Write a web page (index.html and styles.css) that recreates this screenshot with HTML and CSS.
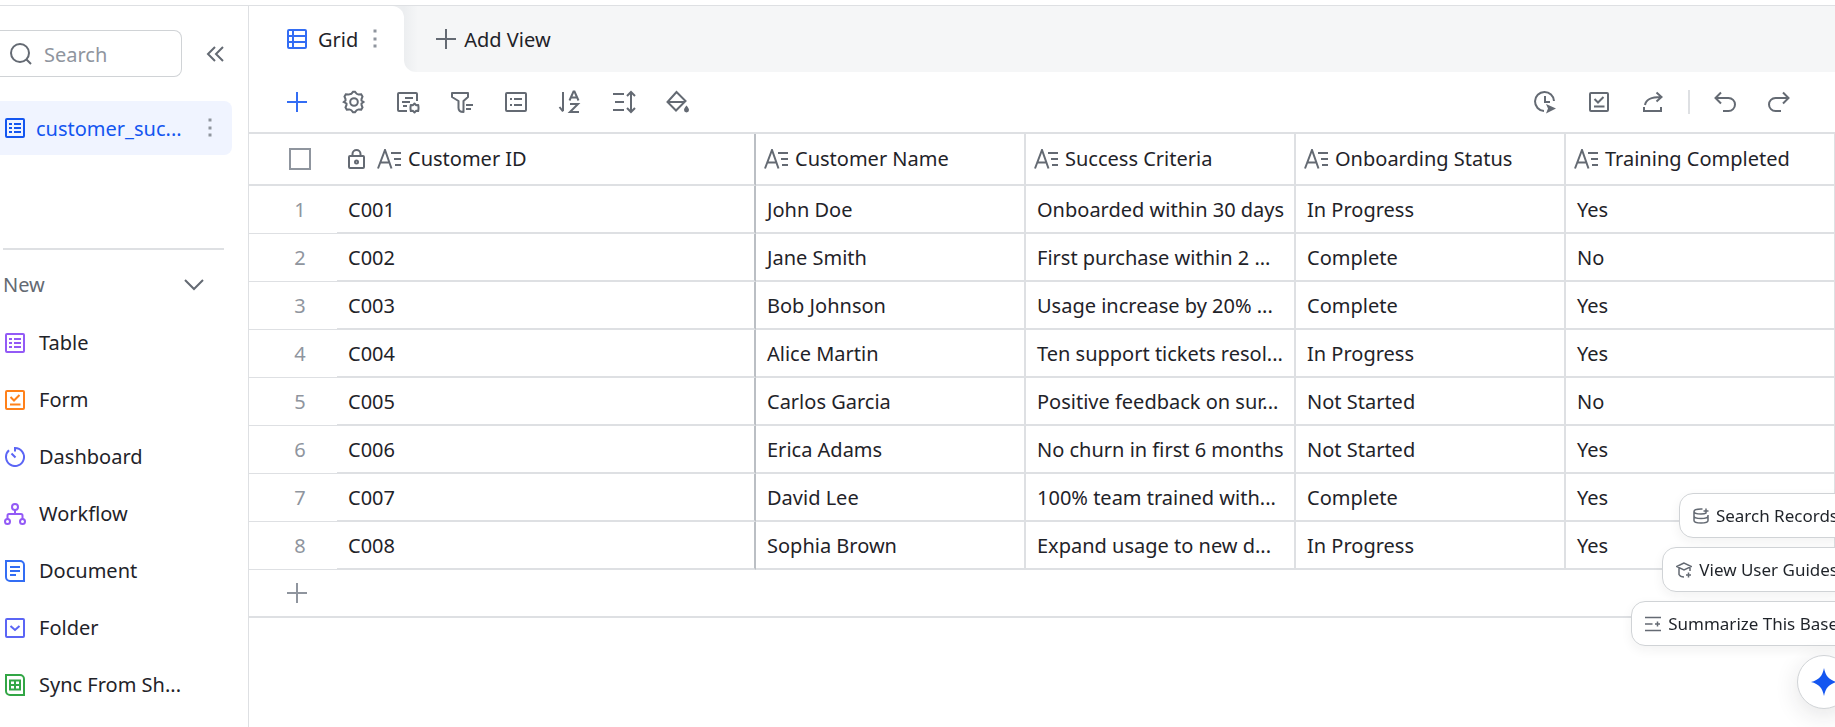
FILE: index.html
```html
<!DOCTYPE html>
<html lang="en">

<head>
    <meta charset="UTF-8">
    <meta name="viewport" content="width=device-width, initial-scale=1.0">
    <title>customer_success</title>
    <link rel="stylesheet" href="styles.css">
</head>

<body>

    <!-- Icons used more than once -->
    <svg class="sprite" aria-hidden="true">
        <symbol id="icon-sheet" viewBox="0 0 20 20">
            <rect x="1" y="1" width="18" height="18" rx="1" />
            <path d="M4 6h3M4 10h3M4 14h3M9 6h7M9 10h7M9 14h7" />
        </symbol>
        <symbol id="icon-text" viewBox="0 0 24 20">
            <path d="M1 19.500L8 1l6.500 18.500M3.500 13.500h8.500M14 4h10M17 10h7M18 16h6" />
        </symbol>
        <symbol id="icon-dots" viewBox="0 0 4 20">
            <path d="M.5 .5h3v3h-3zM.5 8.500h3v3h-3zM.5 15.500h3v3h-3z" fill="currentColor" stroke="none" />
        </symbol>
        <symbol id="icon-plus" viewBox="0 0 20 20">
            <path d="M10 0v20M0 10h20" />
        </symbol>
        <symbol id="icon-form" viewBox="0 0 20 20">
            <rect x="1" y="1" width="18" height="18" rx="1" />
            <path d="M5.500 7l3.500 3.500L14.500 5M5 14.500h10.500" />
        </symbol>
    </svg>

    <div class="app">

        <!-- Sidebar -->
        <aside class="sidebar">
            <div class="search-row">
                <label class="search-box">
                    <svg class="icon-search" viewBox="0 0 22 22"><circle cx="10" cy="10" r="9" /><path d="M16.500 16.500l4.500 4.500" /></svg>
                    <input type="text" placeholder="Search" aria-label="Search">
                </label>
                <button class="collapse" aria-label="Collapse sidebar">
                    <svg viewBox="0 0 18 16"><path d="M9 1L2 8l7 7M17 1l-7 7 7 7" /></svg>
                </button>
            </div>

            <div class="table-item">
                <a href="#" class="table-link">
                    <svg class="icon"><use href="#icon-sheet" /></svg>
                    <span>customer_suc...</span>
                </a>
                <button class="more" aria-label="More"><svg class="dots"><use href="#icon-dots" /></svg></button>
            </div>

            <div class="new-section">
                <button class="new-header">
                    New
                    <svg viewBox="0 0 20 12"><path d="M1 1l9 9 9-9" /></svg>
                </button>
                <button class="new-item">
                    <svg class="icon purple"><use href="#icon-sheet" /></svg>
                    Table
                </button>
                <button class="new-item">
                    <svg class="icon orange"><use href="#icon-form" /></svg>
                    Form
                </button>
                <button class="new-item">
                    <svg class="icon indigo" viewBox="0 0 20 20"><path d="M10 4.500V1a9 9 0 1 1-6 2.300M6.500 6.500l4 4" /></svg>
                    Dashboard
                </button>
                <button class="new-item">
                    <svg class="icon purple wide" viewBox="0 0 22 22"><circle cx="11" cy="4" r="3" /><circle cx="3.500" cy="18.500" r="2.500" /><circle cx="18.500" cy="18.500" r="2.500" /><path d="M11 7v4M3.500 16v-3.500a1.500 1.500 0 0 1 1.500-1.500h12a1.500 1.500 0 0 1 1.500 1.500V16" /></svg>
                    Workflow
                </button>
                <button class="new-item">
                    <svg class="icon blue tall" viewBox="0 0 20 22"><path d="M1 1h14a4 4 0 0 1 4 4v16H5a4 4 0 0 1-4-4zM5 7h10M5 11h10M5 15h6" /></svg>
                    Document
                </button>
                <button class="new-item">
                    <svg class="icon indigo" viewBox="0 0 20 20"><rect x="1" y="1" width="18" height="18" rx="1" /><path d="M5.500 8l4.500 4 4.500-4" /></svg>
                    Folder
                </button>
                <button class="new-item">
                    <svg class="icon green tall" viewBox="0 0 20 22"><path d="M1 1h14a4 4 0 0 1 4 4v16H5a4 4 0 0 1-4-4zM5 6.500h10v9H5zM10 6.500v9M5 11h10" /></svg>
                    Sync From Sh...
                </button>
            </div>
        </aside>

        <main class="main">

            <!-- View tabs -->
            <div class="tabs">
                <div class="tab-back">
                    <div class="tab">
                        <svg class="icon" viewBox="0 0 20 20"><rect x="1" y="1" width="18" height="18" rx="1" /><path d="M1 7h18M1 13h18M6 1v18" /></svg>
                        <span>Grid</span>
                        <button class="more" aria-label="View options"><svg class="dots"><use href="#icon-dots" /></svg></button>
                    </div>
                </div>
                <div class="tab-rest">
                    <button class="add-view">
                        <svg class="icon"><use href="#icon-plus" /></svg>
                        <span>Add View</span>
                    </button>
                </div>
            </div>

            <!-- Toolbar -->
            <div class="toolbar">
                <button class="tool add" aria-label="Add record"><svg class="icon"><use href="#icon-plus" /></svg></button>
                <button class="tool" aria-label="Field settings">
                    <svg viewBox="0 0 24 24"><path d="M9.300 3.800L11 1.800h2l1.700 2 1.800.8 2.700-.2 1.300 2.200-1 2.400v1.500l2 1.500-2 1.500v1.500l1 2.400-1.300 2.200-2.700-.2-1.800.8-1.700 2h-2l-1.700-2-1.800-.8-2.700.2-1.300-2.200 1-2.400v-1.500L1.800 12l1.700-1.500V9l-1-2.400 1.300-2.200 2.700.2z" /><circle cx="12" cy="12" r="3.800" /></svg>
                </button>
                <button class="tool" aria-label="Customize card">
                    <svg viewBox="0 0 24 24"><path d="M11 21H3a1 1 0 0 1-1-1V4a1 1 0 0 1 1-1h17a1 1 0 0 1 1 1v7M9 8h8M6 12h8M7 16h4" /><path d="M18.500 13.500l1.500 1.700 2.200-.2.300 2.200v1.600l-.3 2.200-2.200-.2-1.500 1.700-1.500-1.700-2.200.2-.3-2.200v-1.600l.3-2.200 2.200.2z" stroke-linejoin="round" /></svg>
                </button>
                <button class="tool" aria-label="Filter">
                    <svg viewBox="0 0 24 24"><path d="M2 3h16v4l-4.500 4v11c-3 0-5-1.500-5-4v-7L2 7zM16 15h7M16 19h5" stroke-linejoin="round" /></svg>
                </button>
                <button class="tool" aria-label="Group">
                    <svg viewBox="0 0 24 24"><rect x="2" y="3" width="20" height="18" rx="1" /><path d="M6 9h2M10 9h8M6 15h2M10 15h8" /></svg>
                </button>
                <button class="tool" aria-label="Sort">
                    <svg viewBox="0 0 24 24"><path d="M5 2v19M1.500 17L5 21.500M11.500 10.500l4-9h1l4 9M12.500 7.500h7M12 14h8l-8 8h9" /></svg>
                </button>
                <button class="tool" aria-label="Row height">
                    <svg viewBox="0 0 24 24"><path d="M1 4h11M3 12h9M1 20h11M19 2v20M15 6l4-4 4 4M15 18l4 4 4-4" /></svg>
                </button>
                <button class="tool" aria-label="Fill color">
                    <svg viewBox="0 0 24 24"><path d="M10.500 2l9 9-9.500 9.500L1.500 12zM2 12h17" /><path d="M20.500 15.500c1.500 2 2.500 3.200 2.500 4.500a2.500 2.500 0 0 1-5 0c0-1.300 1-2.500 2.500-4.500z" fill="currentColor" stroke="none" /></svg>
                </button>

                <div class="toolbar-right">
                    <button class="tool" aria-label="Automation">
                        <svg viewBox="0 0 24 24"><path d="M21 11a9.500 9.500 0 1 0-10 10M12 6v6h5" /><path d="M13 14l10 4.500-10 5 2-5z" fill="currentColor" stroke="none" /></svg>
                    </button>
                    <button class="tool" aria-label="Form"><svg class="icon"><use href="#icon-form" /></svg></button>
                    <button class="tool" aria-label="Share">
                        <svg viewBox="0 0 24 24"><path d="M4 15C5 9 10 7 20 7M15.500 2.500L20.500 7 15.500 11.500M3 17v4h17v-4" /></svg>
                    </button>
                    <span class="separator"></span>
                    <button class="tool" aria-label="Undo">
                        <svg viewBox="0 0 24 24"><path d="M8 2.500L2.500 8 8 13.500M3 8h12.500a6.500 6.500 0 0 1 0 13H10" /></svg>
                    </button>
                    <button class="tool" aria-label="Redo">
                        <svg viewBox="0 0 24 24"><path d="M16 2.500L21.500 8 16 13.500M21 8H8.500a6.500 6.500 0 0 0 0 13H14" /></svg>
                    </button>
                </div>
            </div>

            <!-- Data grid -->
            <table class="grid">
                <colgroup>
                    <col class="col-number">
                    <col class="col-id">
                    <col class="col-field">
                    <col class="col-field">
                    <col class="col-field">
                    <col class="col-field">
                </colgroup>
                <thead>
                    <tr>
                        <th class="number"><input type="checkbox" aria-label="Select all"></th>
                        <th class="id">
                            <div class="field">
                                <svg class="icon-lock" viewBox="0 0 17 20"><rect x="1" y="7" width="15" height="12" rx="1" /><path d="M4.500 7V5a4 4 0 0 1 8 0v2" /><circle cx="8.500" cy="13" r="1.500" /></svg>
                                <svg class="icon-text"><use href="#icon-text" /></svg>
                                Customer ID
                            </div>
                        </th>
                        <th><div class="field"><svg class="icon-text"><use href="#icon-text" /></svg>Customer Name</div></th>
                        <th><div class="field"><svg class="icon-text"><use href="#icon-text" /></svg>Success Criteria</div></th>
                        <th><div class="field"><svg class="icon-text"><use href="#icon-text" /></svg>Onboarding Status</div></th>
                        <th><div class="field"><svg class="icon-text"><use href="#icon-text" /></svg>Training Completed</div></th>
                    </tr>
                </thead>
                <tbody>
                    <tr>
                        <td class="number">1</td>
                        <td class="id">C001</td>
                        <td>John Doe</td>
                        <td>Onboarded within 30 days</td>
                        <td>In Progress</td>
                        <td>Yes</td>
                    </tr>
                    <tr>
                        <td class="number">2</td>
                        <td class="id">C002</td>
                        <td>Jane Smith</td>
                        <td>First purchase within 2 ...</td>
                        <td>Complete</td>
                        <td>No</td>
                    </tr>
                    <tr>
                        <td class="number">3</td>
                        <td class="id">C003</td>
                        <td>Bob Johnson</td>
                        <td>Usage increase by 20% ...</td>
                        <td>Complete</td>
                        <td>Yes</td>
                    </tr>
                    <tr>
                        <td class="number">4</td>
                        <td class="id">C004</td>
                        <td>Alice Martin</td>
                        <td>Ten support tickets resol...</td>
                        <td>In Progress</td>
                        <td>Yes</td>
                    </tr>
                    <tr>
                        <td class="number">5</td>
                        <td class="id">C005</td>
                        <td>Carlos Garcia</td>
                        <td>Positive feedback on sur...</td>
                        <td>Not Started</td>
                        <td>No</td>
                    </tr>
                    <tr>
                        <td class="number">6</td>
                        <td class="id">C006</td>
                        <td>Erica Adams</td>
                        <td>No churn in first 6 months</td>
                        <td>Not Started</td>
                        <td>Yes</td>
                    </tr>
                    <tr>
                        <td class="number">7</td>
                        <td class="id">C007</td>
                        <td>David Lee</td>
                        <td>100% team trained with...</td>
                        <td>Complete</td>
                        <td>Yes</td>
                    </tr>
                    <tr>
                        <td class="number">8</td>
                        <td class="id">C008</td>
                        <td>Sophia Brown</td>
                        <td>Expand usage to new d...</td>
                        <td>In Progress</td>
                        <td>Yes</td>
                    </tr>
                </tbody>
            </table>
            <button class="add-row" aria-label="Add row"><svg class="icon"><use href="#icon-plus" /></svg></button>

        </main>
    </div>

    <!-- Assistant shortcuts, floating over the grid -->
    <div class="assistant">
        <button class="suggestion">
            <svg viewBox="0 0 16 16"><path d="M9.500 1H8C4 1 1 2 1 3.500S4 6 8 6c2 0 4-.2 5-.8M1 3.500v9C1 14 4 15 8 15s7-1 7-2.500V7M1 8c0 1.500 3 2.500 7 2.500S15 9.500 15 8M13 .5v5M10.500 3h5" /></svg>
            Search Records
        </button>
        <button class="suggestion">
            <svg viewBox="0 0 16 16"><path d="M8 1L.5 4.500 8 8l7.500-3.500zM3 6v6.500C4 14.500 6 15 8 15M14 5v4M12.500 10.500v5M10 13h5" /></svg>
            View User Guides
        </button>
        <button class="suggestion">
            <svg viewBox="0 0 16 16"><path d="M0 1.500h16M0 8h7.500M0 14.500h16M12.500 5.500v5M10 8h5" /></svg>
            Summarize This Base
        </button>
        <button class="assistant-button" aria-label="Assistant">
            <svg viewBox="0 0 28 28"><path d="M14 0c1.500 8 5 12 13 14-8 2-11.500 6-13 14-1.500-8-5-12-13-14C9 12 12.500 8 14 0z" /></svg>
        </button>
    </div>

</body>
</html>
```

FILE: styles.css
```css
* {
    box-sizing: border-box;
}

body {
    margin: 0;
    padding-top: 5px;
    height: 100vh;
    display: flex;
    overflow: hidden;
    background-color: white;
    color: #1f2329;
    font-family: "Noto Sans", sans-serif;
    font-size: 20px;
    line-height: 28px;
}

button {
    display: flex;
    align-items: center;
    padding: 0;
    border: none;
    background: none;
    color: inherit;
    font: inherit;
    cursor: pointer;
}

svg {
    flex: none;
    fill: none;
    stroke: currentColor;
    stroke-width: 2;
}

.sprite {
    position: absolute;
    width: 0;
    height: 0;
}

.icon {
    width: 20px;
    height: 20px;
}

.dots {
    width: 4px;
    height: 20px;
    color: #8f959e;
}

.app {
    flex: 1;
    display: flex;
    min-width: 0;
    border-top: 1px solid #dee0e3;
}

/* Sidebar */
.sidebar {
    flex: none;
    width: 249px;
    border-right: 1px solid #dee0e3;
}

.search-row {
    display: flex;
    align-items: center;
    justify-content: space-between;
    padding: 24px 24px 24px 0;
}

.search-box {
    display: flex;
    align-items: center;
    gap: 12px;
    width: 182px;
    height: 47px;
    padding-left: 10px;
    border: 1px solid #d0d3d6;
    border-left: none;
    border-radius: 0 8px 8px 0;
    color: #646a73;
}

.icon-search {
    width: 22px;
    height: 22px;
}

.search-box input {
    width: 120px;
    padding: 2px 0 0;
    border: none;
    outline: none;
    background: none;
    font: inherit;
}

.search-box input::placeholder {
    color: #8f959e;
}

.collapse {
    color: #646a73;
}

.collapse svg {
    width: 18px;
    height: 16px;
}

.table-item {
    display: flex;
    align-items: center;
    justify-content: space-between;
    height: 54px;
    margin-right: 16px;
    padding: 0 20px 0 5px;
    border-radius: 0 8px 8px 0;
    background-color: #f0f4ff;
}

.table-link {
    display: flex;
    align-items: center;
    gap: 11px;
    color: #1456f0;
    text-decoration: none;
}

.table-link span,
.tab span,
.add-view span {
    padding-top: 2px;
}

.new-section {
    margin: 93px 24px 0 3px;
    border-top: 2px solid #dee0e3;
    padding-top: 6px;
}

.new-header {
    justify-content: space-between;
    width: 100%;
    height: 58px;
    padding-right: 20px;
    color: #646a73;
}

.new-header svg {
    width: 20px;
    height: 12px;
}

.new-item {
    gap: 14px;
    height: 57px;
    padding-left: 2px;
    white-space: nowrap;
}

.wide {
    width: 22px;
    height: 22px;
    margin: 0 -1px;
}

.tall {
    height: 22px;
}

.purple {
    color: #935af6;
}

.orange {
    color: #ff811a;
}

.indigo {
    color: #5b65f5;
}

.blue {
    color: #336df4;
}

.green {
    color: #32a645;
}

/* View tabs */
.main {
    flex: 1;
    min-width: 0;
    overflow: hidden;
}

.tabs {
    display: flex;
    height: 66px;
}

.tab-back {
    background: linear-gradient(#eceef0 50%, white 50%);
}

.tab {
    display: flex;
    align-items: center;
    gap: 11px;
    height: 100%;
    padding: 0 27px 0 38px;
    border-radius: 0 12px 0 0;
    background-color: white;
}

.tab .icon {
    color: #336df4;
}

.tab .more {
    margin-left: 4px;
}

.tab-rest {
    flex: 1;
    display: flex;
    padding-left: 32px;
    border-radius: 0 0 0 12px;
    background: linear-gradient(to right, #eceef0, #f5f6f7 14px);
}

.add-view {
    gap: 8px;
}

.add-view .icon {
    color: #646a73;
}

/* Toolbar */
.toolbar {
    display: flex;
    align-items: center;
    height: 60px;
    padding: 0 29px 0 21px;
    color: #646a73;
}

.tool {
    justify-content: center;
    width: 54px;
    height: 40px;
}

.tool svg {
    width: 24px;
    height: 24px;
}

.tool .icon {
    width: 20px;
    height: 20px;
}

.tool.add {
    margin-right: 3px;
    color: #336df4;
}

.toolbar-right {
    display: flex;
    align-items: center;
    margin-left: auto;
}

.separator {
    width: 2px;
    height: 24px;
    margin: 0 8px;
    background-color: #dee0e3;
}

/* Data grid */
.grid {
    width: 1587px;
    table-layout: fixed;
    border-collapse: separate;
    border-spacing: 0;
    border-top: 2px solid #dee0e3;
}

.col-number {
    width: 88px;
}

.col-id {
    width: 419px;
}

.col-field {
    width: 270px;
}

.grid th,
.grid td {
    height: 48px;
    padding: 1px 0 0 11px;
    border-right: 2px solid #dee0e3;
    border-bottom: 2px solid #dee0e3;
    font-weight: normal;
    text-align: left;
    white-space: nowrap;
}

.grid th {
    height: 52px;
    padding: 0 0 0 8px;
}

.grid .id {
    padding-left: 11px;
    border-right: 2px solid #bbbfc4;
}

.grid .number {
    padding-left: 14px;
    border-right: none;
    color: #8f959e;
    text-align: center;
}

.grid td.number {
    border-bottom-width: 1px;
}

.grid input {
    appearance: none;
    display: block;
    width: 22px;
    height: 22px;
    margin: 0 auto;
    border: 2px solid #8f959e;
}

.field {
    display: flex;
    align-items: center;
    gap: 7px;
}

.icon-text {
    width: 24px;
    height: 20px;
    color: #646a73;
}

.icon-lock {
    width: 17px;
    height: 20px;
    margin-right: 5px;
    color: #646a73;
}

.add-row {
    width: 100%;
    height: 48px;
    padding-left: 38px;
    border-bottom: 2px solid #dee0e3;
    color: #8f959e;
}

/* Assistant shortcuts */
.assistant {
    position: fixed;
    right: -18px;
    bottom: 18px;
    display: flex;
    flex-direction: column;
    align-items: flex-end;
    gap: 9px;
    font-size: 17px;
}

.suggestion {
    gap: 7px;
    height: 45px;
    padding: 0 14px 0 13px;
    border: 1px solid #d0d3d6;
    border-radius: 14px;
    background-color: white;
    box-shadow: 0 4px 12px rgba(31, 35, 41, 0.06);
}

.suggestion svg {
    width: 16px;
    height: 16px;
    color: #646a73;
    stroke-width: 1.5;
}

.assistant-button {
    justify-content: center;
    width: 54px;
    height: 54px;
    margin-right: 2px;
    border: 1px solid #d0d3d6;
    border-radius: 50%;
    background-color: white;
    box-shadow: 0 6px 24px rgba(31, 35, 41, 0.12);
}

.assistant-button svg {
    width: 28px;
    height: 28px;
    fill: #1456f0;
    stroke: none;
}
```
